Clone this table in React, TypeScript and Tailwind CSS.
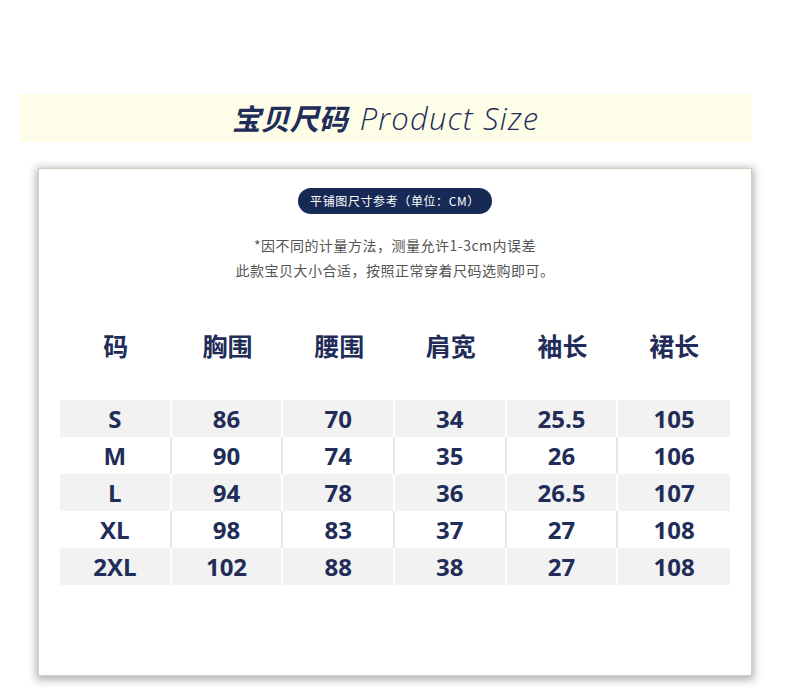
const cols = ["码", "胸围", "腰围", "肩宽", "袖长", "裙长"];

const rows = [
  ["S", "86", "70", "34", "25.5", "105"],
  ["M", "90", "74", "35", "26", "106"],
  ["L", "94", "78", "36", "26.5", "107"],
  ["XL", "98", "83", "37", "27", "108"],
  ["2XL", "102", "88", "38", "27", "108"],
];

const cjk = "font-['Noto_Sans_CJK_SC',sans-serif]";
const num = "font-['Open_Sans','Noto_Sans_CJK_SC',sans-serif]";

export default function App() {
  return (
    <div className="h-[692px] w-[790px] overflow-hidden bg-white pt-[94px]">
      <div className="ml-[20px] flex h-[48px] w-[731px] items-center justify-center bg-[#fefee8] text-[#222c58]">
        <span className={`${cjk} text-[29px] font-bold italic`}>宝贝尺码</span>
        <span className="ml-[12px] font-['Open_Sans',sans-serif] text-[31px] font-light italic tracking-[1.2px]">
          Product Size
        </span>
      </div>

      <div className="ml-[38px] mt-[26px] flex h-[508px] w-[714px] flex-col items-center border border-[#cfcfbf] bg-white pt-[19px] shadow-[0_2px_8px_2px_rgba(0,0,0,0.3)]">
        <div
          className={`${cjk} flex h-[26px] items-center rounded-full bg-[#172a55] px-[12px] text-[12px] tracking-[0.6px] text-white`}
        >
          平铺图尺寸参考（单位：CM）
        </div>
        <div className={`${cjk} mt-[19px] text-center text-[14px] leading-[25px] tracking-[0.5px] text-[#555]`}>
          <p>*因不同的计量方法，测量允许1-3cm内误差</p>
          <p>此款宝贝大小合适，按照正常穿着尺码选购即可。</p>
        </div>

        <div className="mt-[38px] grid w-[670px] grid-cols-6">
          {cols.map((c) => (
            <div
              key={c}
              className={`${cjk} flex h-[50px] items-center justify-center text-[25px] font-bold text-[#222c58]`}
            >
              {c}
            </div>
          ))}
        </div>

        <div className="mt-[29px] w-[670px]">
          {rows.map((r, i) => (
            <div
              key={r[0]}
              className={`grid h-[37px] grid-cols-6 ${i % 2 === 0 ? "bg-[#f2f2f2]" : "bg-white"}`}
            >
              {r.map((v, j) => (
                <div
                  key={j}
                  className={`${num} flex items-center justify-center text-[24px] font-bold text-[#222c58] ${
                    j < 5 ? (i % 2 === 0 ? "border-r-2 border-white" : "border-r-2 border-[#e8e8e8]") : ""
                  }`}
                >
                  {v}
                </div>
              ))}
            </div>
          ))}
        </div>
      </div>
    </div>
  );
}
